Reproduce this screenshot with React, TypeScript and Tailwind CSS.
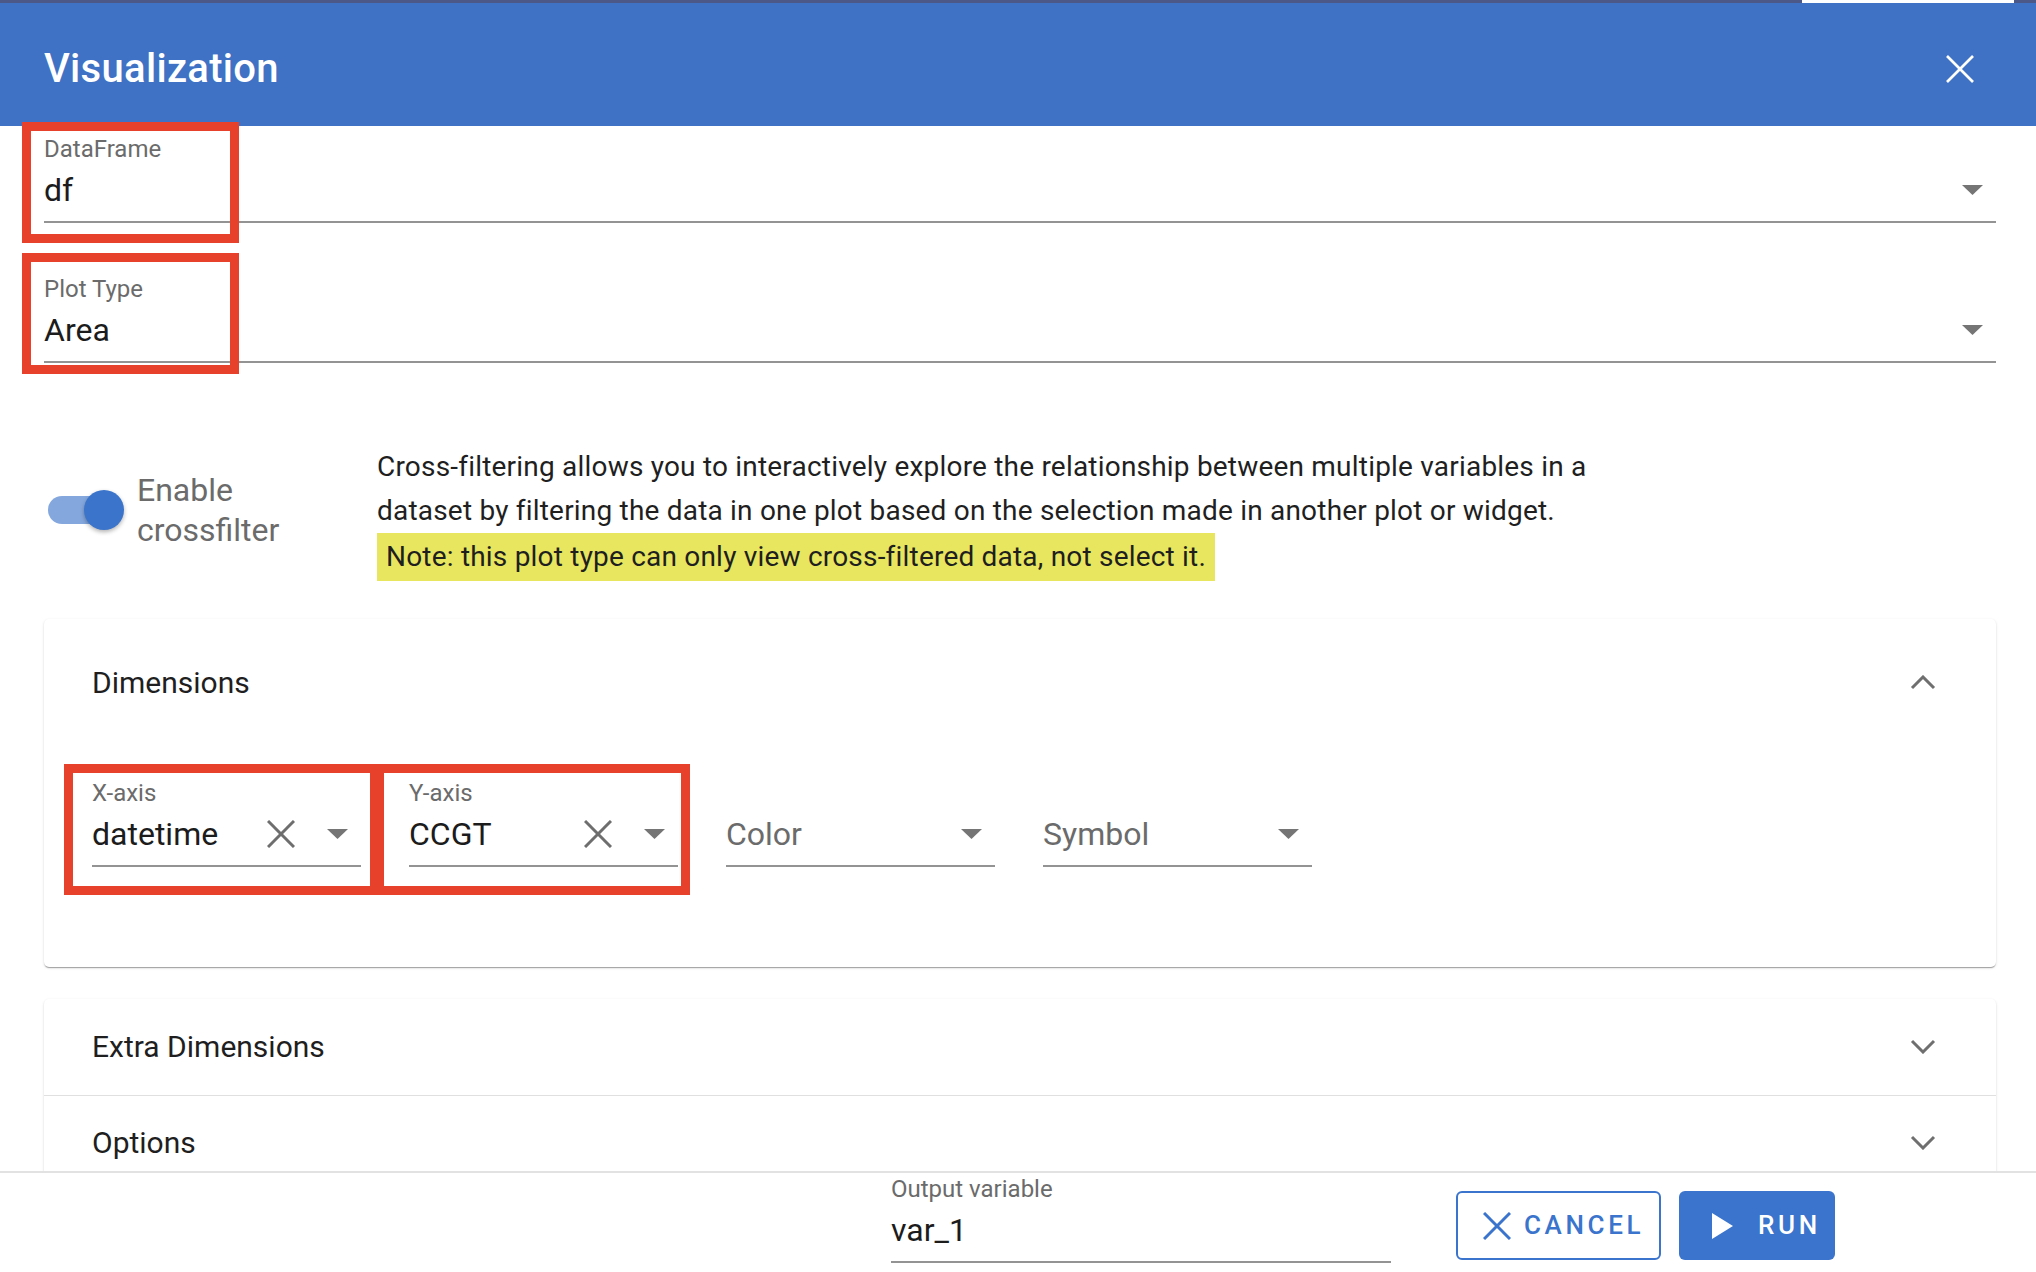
import React from 'react';

const FONT = { fontFamily: 'Roboto, "Noto Sans", sans-serif' };

function Caret({ className = '' }: { className?: string }) {
  return (
    <svg width="21" height="10" viewBox="0 0 21 10" className={className}>
      <polygon points="0,0 21,0 10.5,10" fill="#757575" />
    </svg>
  );
}

function Cross({ size = 28, color = '#6e6e6e', stroke = 3 }: { size?: number; color?: string; stroke?: number }) {
  return (
    <svg width={size} height={size} viewBox={`0 0 ${size} ${size}`}>
      <line x1="1" y1="1" x2={size - 1} y2={size - 1} stroke={color} strokeWidth={stroke} />
      <line x1={size - 1} y1="1" x2="1" y2={size - 1} stroke={color} strokeWidth={stroke} />
    </svg>
  );
}

function Chevron({ up }: { up?: boolean }) {
  return (
    <svg width="26" height="15" viewBox="0 0 26 15">
      <polyline
        points={up ? '2,13 13,2 24,13' : '2,2 13,13 24,2'}
        fill="none"
        stroke="#6f6f6f"
        strokeWidth="3"
      />
    </svg>
  );
}

function Field({
  label,
  value,
  placeholder,
  clearable,
  className = '',
}: {
  label?: string;
  value?: string;
  placeholder?: string;
  clearable?: boolean;
  className?: string;
}) {
  return (
    <div className={`pt-[10px] ${className}`}>
      <div className="text-[24px] leading-[26px] text-[#6b6b6b] h-[26px]">{label}</div>
      <div className="mt-[6px] h-[44px] flex items-center">
        {value ? (
          <span className="text-[32px] text-[#1c1c1c]">{value}</span>
        ) : (
          <span className="text-[32px] text-[#6b6b6b]">{placeholder}</span>
        )}
        <div className="flex-1" />
        {clearable && (
          <div className="mr-[32px]">
            <Cross />
          </div>
        )}
        <Caret className="mr-[13px]" />
      </div>
      <div className="mt-[9px] h-[2px] bg-[#939393]" />
    </div>
  );
}

function RedBox({ className }: { className: string }) {
  return <div className={`absolute border-[9px] border-[#e8412b] pointer-events-none ${className}`} />;
}

const CARD =
  'rounded-[5px] bg-white shadow-[0_2px_1px_-1px_rgba(0,0,0,0.2),0_1px_1px_0_rgba(0,0,0,0.14),0_1px_3px_0_rgba(0,0,0,0.12)]';

export default function App() {
  return (
    <div className="relative w-[2036px] h-[1272px] overflow-hidden bg-white flex flex-col" style={FONT}>
      {/* top strip of the page behind the dialog */}
      <div className="h-[3px] bg-[#4b5888] flex justify-end">
        <div className="w-[212px] bg-white" />
        <div className="w-[22px]" />
      </div>

      {/* header */}
      <div className="h-[123px] bg-[#3f71c4] flex items-center justify-between pl-[44px] pr-[62px] pt-[9px]">
        <h1 className="text-[40px] font-medium text-white tracking-[0.3px]">Visualization</h1>
        <Cross size={28} color="#ffffff" stroke={2.6} />
      </div>

      {/* body */}
      <div className="flex-1 overflow-hidden pl-[44px] pr-[40px]">
        <Field label="DataFrame" value="df" />
        <Field label="Plot Type" value="Area" className="mt-[43px]" />

        <div className="mt-[82px] flex items-center">
          <div className="w-[333px] flex items-center mb-[6px]">
            <div className="relative w-[76px] h-[40px] ml-[4px]">
              <div className="absolute left-0 top-[6px] w-[68px] h-[28px] rounded-full bg-[#84a8de]" />
              <div className="absolute left-[36px] top-0 w-[40px] h-[40px] rounded-full bg-[#3a74cb] shadow-[0_2px_4px_rgba(0,0,0,0.3)]" />
            </div>
            <div className="ml-[13px] w-[190px] text-[32px] leading-[40px] text-[#6b6b6b]">Enable crossfilter</div>
          </div>
          <div className="text-[28px] leading-[44px] tracking-[0.2px] text-[#1f1f1f]">
            <div className="whitespace-nowrap">
              Cross-filtering allows you to interactively explore the relationship between multiple variables in a
            </div>
            <div className="whitespace-nowrap">
              dataset by filtering the data in one plot based on the selection made in another plot or widget.
            </div>
            <div className="inline-block bg-[#e8e65e] px-[9px] py-[2px] whitespace-nowrap">
              Note: this plot type can only view cross-filtered data, not select it.
            </div>
          </div>
        </div>

        {/* Dimensions accordion */}
        <div className={`mt-[38px] pb-[100px] ${CARD}`}>
          <div className="h-[126px] flex items-center justify-between pl-[48px] pr-[60px]">
            <span className="text-[30px] text-[#1f1f1f]">Dimensions</span>
            <Chevron up />
          </div>
          <div className="mt-[25px] pl-[48px] flex gap-[48px]">
            <Field label="X-axis" value="datetime" clearable className="w-[269px]" />
            <Field label="Y-axis" value="CCGT" clearable className="w-[269px]" />
            <Field placeholder="Color" className="w-[269px]" />
            <Field placeholder="Symbol" className="w-[269px]" />
          </div>
        </div>

        {/* collapsed accordions */}
        <div className={`mt-[32px] ${CARD}`}>
          <div className="h-[96px] pb-[1px] flex items-center justify-between pl-[48px] pr-[60px]">
            <span className="text-[30px] text-[#1f1f1f]">Extra Dimensions</span>
            <Chevron />
          </div>
          <div className="h-px bg-[#e0e0e0]" />
          <div className="h-[95px] pb-[2px] flex items-center justify-between pl-[48px] pr-[60px]">
            <span className="text-[30px] text-[#1f1f1f]">Options</span>
            <Chevron />
          </div>
        </div>
      </div>

      {/* footer */}
      <div className="h-[101px] border-t-2 border-[#e2e2e2] bg-white flex justify-end items-start pr-[201px]">
        <div className="w-[500px] pt-[3px]">
          <div className="text-[24px] leading-[26px] text-[#6b6b6b]">Output variable</div>
          <div className="mt-[6px] h-[44px] flex items-center text-[32px] text-[#1c1c1c]">var_1</div>
          <div className="mt-[9px] h-[2px] bg-[#939393]" />
        </div>
        <button className="ml-[65px] mt-[18px] w-[205px] h-[69px] rounded-[6px] border-2 border-[#3a74cc] bg-white flex items-center pl-[25px] gap-[13px] text-[#3a74cc]">
          <Cross size={28} color="#3a74cc" stroke={3} />
          <span className="text-[26px] font-medium tracking-[0.14em]">CANCEL</span>
        </button>
        <button className="ml-[18px] mt-[18px] w-[156px] h-[69px] rounded-[6px] bg-[#3a74cc] flex items-center pl-[33px] gap-[25px] text-white">
          <svg width="21" height="26" viewBox="0 0 21 26">
            <polygon points="0,0 21,13 0,26" fill="#ffffff" />
          </svg>
          <span className="text-[26px] font-medium tracking-[0.14em]">RUN</span>
        </button>
      </div>

      {/* red annotation boxes */}
      <RedBox className="left-[22px] top-[122px] w-[217px] h-[121px]" />
      <RedBox className="left-[22px] top-[253px] w-[217px] h-[121px]" />
      <RedBox className="left-[64px] top-[764px] w-[315px] h-[131px]" />
      <RedBox className="left-[375px] top-[764px] w-[315px] h-[131px]" />
    </div>
  );
}
